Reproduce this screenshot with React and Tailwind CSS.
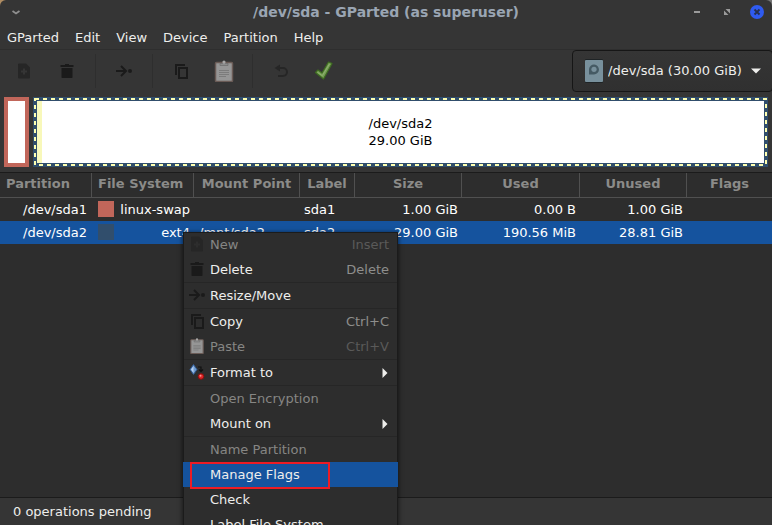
import React from "react";

const NewIcon = () => (
  <svg width="16" height="16" viewBox="0 0 16 16">
    <path fill="#262626" fillRule="evenodd" d="M3 .5h7l4 4v10a1 1 0 0 1-1 1H3a1 1 0 0 1-1-1v-13a1 1 0 0 1 1-1ZM7 5.500v2H5v2h2v2h2v-2h2v-2H9v-2Z" />
  </svg>
);

const TrashIcon = () => (
  <svg width="16" height="16" viewBox="0 0 16 16" fill="#1a1a1a">
    <path d="M1.500 2H6V1h4v1h4.500v2h-13ZM2.500 5h11v9.500l-.5.5h-10l-.5-.5Z" />
  </svg>
);

const ResizeIcon = () => (
  <svg width="16" height="16" viewBox="0 0 16 16">
    <path d="M0 8h9M5 3l5 5-5 5" fill="none" stroke="#1a1a1a" strokeWidth="2" />
    <circle cx="14" cy="8" r="2" fill="#1a1a1a" />
  </svg>
);

const CopyIcon = () => (
  <svg width="16" height="16" viewBox="0 0 16 16" fill="none" stroke="#1a1a1a" strokeWidth="2">
    <path d="M3 12V2h9" />
    <rect x="6" y="5" width="8" height="10" />
  </svg>
);

const PasteIcon = ({ size }) => (
  <svg width={size} height={size} viewBox="0 0 22 22">
    <rect x="2.500" y="2.500" width="17" height="19" rx="1" fill="#969696" stroke="#6a5b56" strokeWidth="1.500" />
    <path d="M7 5.500V3.500h2.500a1.600 1.600 0 0 1 3 0H15v2Z" fill="#8c8c8c" stroke="#666" strokeWidth=".6" />
    <circle cx="11" cy="2" r="1.600" fill="#a6a6a6" />
    <path d="M6 10.500h10M6 12.500h10M6 14.500h10M6 16.500h7" stroke="#737373" strokeWidth=".8" />
  </svg>
);

const UndoIcon = () => (
  <svg width="16" height="16" viewBox="0 0 16 16">
    <path d="M5 5h5a4 4 0 0 1 0 8H5" fill="none" stroke="#262626" strokeWidth="2" />
    <path d="M1.500 5 7 1.500v7Z" fill="#262626" />
  </svg>
);

const ApplyIcon = () => (
  <svg width="22" height="22" viewBox="0 0 22 22">
    <path d="m2.500 12.500 2.500-2.500L9 13 15.500 2l3.500 1.500L10.500 19Z" fill="#759c55" stroke="#3d6b20" strokeWidth="1.200" strokeLinejoin="round" />
    <path d="m4.500 12.300 4.800 3.400L16.500 4" fill="none" stroke="#8fb16f" strokeWidth="1" />
  </svg>
);

const FormatIcon = () => (
  <svg width="16" height="16" viewBox="0 0 16 16">
    <path d="M4.500 0.500 8 5.500 4.500 10.500 1 5.500Z" fill="#6f9bd1" stroke="#2f568c" />
    <path d="M4.500 2v7L2 5.500Z" fill="#b5cfee" />
    <path d="M9 3h3v4M10 5.500l2 2 2-2" fill="none" stroke="#111" strokeWidth="1.200" />
    <circle cx="12" cy="12.500" r="2.800" fill="#dc2626" stroke="#8b0f0f" />
    <circle cx="11.500" cy="11.800" r="1" fill="#fb8f8f" />
  </svg>
);

const DiskIcon = () => (
  <svg width="18" height="24" viewBox="0 0 18 24">
    <rect width="18" height="24" rx="1" fill="#1f2426" />
    <rect y="1" width="18" height="22" rx="1" fill="#78909c" />
    <path d="M4 15.500V10a5 5 0 1 1 5 5.500Z" fill="#455a64" />
    <circle cx="9" cy="10.300" r="2.600" fill="#78909c" />
  </svg>
);

const toolGroups = [
  [
    { name: "New", icon: <NewIcon /> },
    { name: "Delete", icon: <TrashIcon /> },
  ],
  [{ name: "Resize/Move", icon: <ResizeIcon /> }],
  [
    { name: "Copy", icon: <CopyIcon /> },
    { name: "Paste", icon: <PasteIcon size={22} /> },
  ],
  [
    { name: "Undo", icon: <UndoIcon /> },
    { name: "Apply", icon: <ApplyIcon /> },
  ],
];

const menuGroups = [
  [
    { text: "New", icon: <NewIcon />, keys: "Insert", off: true },
    { text: "Delete", icon: <TrashIcon />, keys: "Delete" },
  ],
  [{ text: "Resize/Move", icon: <ResizeIcon /> }],
  [
    { text: "Copy", icon: <CopyIcon />, keys: "Ctrl+C" },
    { text: "Paste", icon: <PasteIcon size={16} />, keys: "Ctrl+V", off: true },
  ],
  [{ text: "Format to", icon: <FormatIcon />, sub: true }],
  [
    { text: "Open Encryption", off: true },
    { text: "Mount on", sub: true },
  ],
  [
    { text: "Name Partition", off: true },
    { text: "Manage Flags", active: true },
    { text: "Check" },
    { text: "Label File System" },
  ],
];

const columns = [
  { name: "Partition", width: "w-[92px]", align: "text-left" },
  { name: "File System", width: "w-[102px]", align: "text-left" },
  { name: "Mount Point", width: "w-[106px]", align: "text-center" },
  { name: "Label", width: "w-[55px]", align: "text-center" },
  { name: "Size", width: "w-[107px]", align: "text-center" },
  { name: "Used", width: "w-[118px]", align: "text-center" },
  { name: "Unused", width: "w-[107px]", align: "text-center" },
  { name: "Flags", width: "w-auto", align: "text-center" },
];

const rows = [
  { part: "/dev/sda1", fs: "linux-swap", color: "bg-[#c1665a]", mount: "", label: "sda1", size: "1.00 GiB", used: "0.00 B", unused: "1.00 GiB" },
  { part: "/dev/sda2", fs: "ext4", color: "bg-[#314e6c]", mount: "/mnt/sda2", label: "sda2", size: "29.00 GiB", used: "190.56 MiB", unused: "28.81 GiB", selected: true },
];

function TitleBar() {
  return (
    <header className="grid h-6 shrink-0 grid-cols-[1fr_auto_1fr] items-center">
      <button aria-label="Window menu" className="flex h-6 w-8 items-center justify-center">
        <svg width="8" height="5" viewBox="0 0 8 5"><path d="m.5 1 3.500 2.500L7.500 1" fill="none" stroke="#8f8f8f" strokeWidth="1.800" /></svg>
      </button>
      <h1 className="text-[14px] font-bold text-[#9aa5b3]">/dev/sda - GParted (as superuser)</h1>
      <div className="flex justify-end">
        <button aria-label="Minimize" className="flex h-6 w-[30px] items-center justify-center">
          <span className="h-0.5 w-1.5 bg-[#9a9a9a]" />
        </button>
        <button aria-label="Maximize" className="flex h-6 w-[30px] items-center justify-center">
          <svg width="6" height="6" viewBox="0 0 6 6" fill="#9a9a9a"><path d="M1.500 0H6v4.500ZM0 1.500V6h4.500Z" /></svg>
        </button>
        <button aria-label="Close" className="flex h-6 w-[30px] items-center justify-center">
          <svg width="14" height="14" viewBox="0 0 14 14">
            <circle cx="7" cy="7" r="7" fill="#2f5bf0" />
            <path d="m4.500 4.500 5 5m0-5-5 5" stroke="#26304f" strokeWidth="1.800" />
          </svg>
        </button>
      </div>
    </header>
  );
}

function Toolbar() {
  return (
    <div className="flex h-[47px] shrink-0 items-start justify-between pl-0.5">
      <div className="flex h-[42px] items-center">
        {toolGroups.map((group, i) => (
          <React.Fragment key={i}>
            {i > 0 && (
              <div className="flex w-3.5 justify-center"><span className="h-[34px] w-px bg-[#2e2e2e]" /></div>
            )}
            {group.map((t) => (
              <button key={t.name} aria-label={t.name} className="flex h-10 w-[43px] items-center justify-center">
                {t.icon}
              </button>
            ))}
          </React.Fragment>
        ))}
      </div>
      <div className="relative -mr-px">
        <span className="absolute top-[9px] left-[13px]"><DiskIcon /></span>
        <select
          aria-label="Device"
          className="h-[42px] w-[201px] appearance-none rounded border border-[#161616] bg-linear-to-b from-[#353535] to-[#303030] pl-[35px] text-[#eeeeec]"
        >
          <option>/dev/sda (30.00 GiB)</option>
        </select>
        <svg className="absolute top-[18px] right-3" width="10" height="6" viewBox="0 0 10 6"><path d="M0 .5h10L5 5.500Z" fill="#eeeeec" /></svg>
      </div>
    </div>
  );
}

function DiskMap() {
  return (
    <div className="flex h-[75px] shrink-0 gap-1 px-1 pb-[5px]">
      <div className="w-[25px] border-4 border-[#c1665a] bg-white" />
      <div className="relative flex flex-1 items-center justify-center border-4 border-[#314e6c] bg-white text-black">
        <span className="absolute inset-y-0 left-0 w-[5px] bg-[#f8f8ba]" />
        <svg className="absolute -inset-1 h-[calc(100%+8px)] w-[calc(100%+8px)]">
          <rect x="2" y="2" className="h-[calc(100%-4px)] w-[calc(100%-4px)]" fill="none" stroke="#ffffb0" strokeWidth="2" strokeDasharray="4 4" />
        </svg>
        <p className="leading-[17px]">/dev/sda2<br />29.00 GiB</p>
      </div>
    </div>
  );
}

function PartitionTable() {
  return (
    <table className="w-full table-fixed border-separate border-spacing-0">
      <thead>
        <tr className="h-[25px]">
          {columns.map((c, i) => (
            <th
              key={c.name}
              className={`${c.width} ${c.align} ${i < columns.length - 1 ? "border-r" : ""} border-b border-[#505050] px-1.5 pb-0.5 align-middle font-bold whitespace-nowrap text-[#8b8b89]`}
            >
              {c.name}
            </th>
          ))}
        </tr>
      </thead>
      <tbody>
        {rows.map((r) => (
          <tr key={r.part} className={`h-[23px] text-white ${r.selected ? "bg-[#15539e]" : ""}`}>
            <td className="pr-[5px] text-right">{r.part}</td>
            <td className="pr-1 pl-1.5">
              <div className="flex h-[18px] items-center justify-between">
                <span className={`mb-0.5 size-4 ${r.color}`} />
                <span>{r.fs}</span>
              </div>
            </td>
            <td className="pl-[5px]">{r.mount}</td>
            <td className="pl-1">{r.label}</td>
            <td className="pr-1 text-right">{r.size}</td>
            <td className="pr-1 text-right">{r.used}</td>
            <td className="pr-1 text-right">{r.unused}</td>
            <td />
          </tr>
        ))}
      </tbody>
    </table>
  );
}

function ContextMenu() {
  return (
    <div role="menu" className="absolute top-[232px] left-[183px] w-[215px] bg-[#2d2d2d] shadow-[0_1px_4px_1px_rgba(0,0,0,0.5)]">
      <span className="pointer-events-none absolute inset-0 border border-[#1b1b1b]" />
      {menuGroups.map((group, i) => (
        <div key={i} className={i > 0 ? "border-t border-[#262626]" : ""}>
          {group.map((m) => (
            <button
              key={m.text}
              role="menuitem"
              disabled={m.off}
              className={`relative flex h-[25px] w-full items-center gap-[5px] pr-[9px] pl-1.5 text-left ${m.off ? "text-[#868684]" : "text-[#eeeeec]"} ${m.active ? "bg-[#15539e]" : ""}`}
            >
              <span className="mb-0.5 w-4">{m.icon}</span>
              <span className="flex-1">{m.text}</span>
              {m.keys && <span className={m.off ? "text-[#5a5a59]" : "text-[#8e8e8c]"}>{m.keys}</span>}
              {m.sub && (
                <svg className="mr-px" width="6" height="10" viewBox="0 0 6 10"><path d="M.5 0v10L5.500 5Z" fill="#eeeeec" /></svg>
              )}
              {m.active && <span className="absolute top-0 left-[7px] h-[27px] w-[140px] border-2 border-[#ed1c24]" />}
            </button>
          ))}
        </div>
      ))}
    </div>
  );
}

export default function App() {
  return (
    <div className="bg-linear-to-r from-[#b08d62] to-[#777777] font-['DejaVu_Sans',sans-serif] text-[13px] leading-4 text-[#eeeeec]">
      <div className="relative flex h-screen flex-col overflow-hidden rounded-t-md bg-[#353535]">
        <TitleBar />
        <nav className="flex h-[26px] shrink-0 gap-0.5 border-b border-[#2e2e2e]">
          {["GParted", "Edit", "View", "Device", "Partition", "Help"].map((m) => (
            <button key={m} className="px-[7px] pt-0.5">{m}</button>
          ))}
        </nav>
        <Toolbar />
        <DiskMap />
        <main className="min-h-0 flex-1 border-y border-[#1b1b1b] bg-[#2d2d2d]">
          <PartitionTable />
        </main>
        <footer className="flex h-[27px] shrink-0 items-center px-[13px]">0 operations pending</footer>
        <ContextMenu />
      </div>
    </div>
  );
}
